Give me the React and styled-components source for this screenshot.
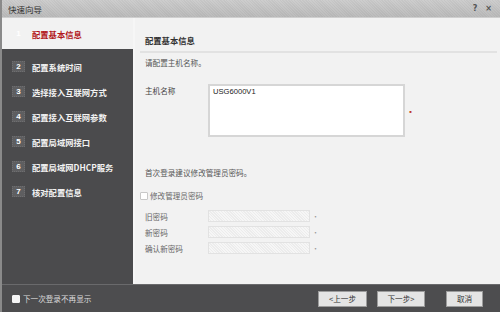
import { createGlobalStyle } from 'styled-components'
import styled from 'styled-components'

const GlobalStyle = createGlobalStyle`
  html, body {
    margin: 0;
    padding: 0;
    width: 500px;
    height: 312px;
    overflow: hidden;
    background: #f2f2f2;
    font-family: "Noto Sans CJK SC", "Liberation Sans", sans-serif;
  }
  * {
    box-sizing: border-box;
  }
`

const Window = styled.div`
  width: 500px;
  height: 312px;
  display: flex;
  flex-direction: column;
  background: #f2f2f2;
  border-left: 2px solid #8a8a8a;
`

const TitleBar = styled.div`
  height: 18px;
  flex: none;
  display: flex;
  align-items: center;
  justify-content: space-between;
  padding: 0 8px 0 6px;
  background: repeating-linear-gradient(45deg, #dcdcdc 0 1px, #e4e4e4 1px 2px),
    linear-gradient(#e6e6e6, #d2d2d2);
  background-blend-mode: multiply;
  border-bottom: 1px solid #cfcfcf;
  font-size: 8.5px;
  color: #333;
`

const TitleTools = styled.div`
  display: flex;
  gap: 8px;
  font-size: 8px;
  font-weight: bold;
  color: #555;
  font-family: "DejaVu Sans", sans-serif;
`

const Body = styled.div`
  flex: 1;
  display: flex;
  min-height: 0;
`

const Sidebar = styled.div`
  width: 131px;
  flex: none;
  display: flex;
  flex-direction: column;
  background: #4b4b4d;
`

const Step = styled.div`
  display: flex;
  align-items: center;
  gap: 7px;
  height: ${p => (p.$active ? '31px' : '25px')};
  padding-left: 10px;
  margin-bottom: ${p => (p.$active ? '5px' : '0')};
  background: ${p => (p.$active ? '#f2f2f2' : 'transparent')};
  color: ${p => (p.$active ? '#b3191c' : '#f2f2f2')};
  font-size: 8.3px;
  font-weight: bold;
`

const Badge = styled.span`
  width: 13px;
  height: 11px;
  display: flex;
  align-items: center;
  justify-content: center;
  font-family: "Liberation Sans", sans-serif;
  font-size: 8px;
  font-weight: bold;
  color: #fff;
  background: ${p => (p.$active ? 'transparent' : '#5e5e60')};
  border: 1px dotted ${p => (p.$active ? 'transparent' : '#6e6e70')};
`

const Content = styled.div`
  flex: 1;
  padding: 16px 3px 0 5px;
  border-left: 2px solid #f6f6f6;
  display: flex;
  flex-direction: column;
`

const Heading = styled.div`
  font-size: 8.3px;
  font-weight: bold;
  color: #333;
  padding: 0 0 5px 5px;
  border-bottom: 2px solid #e2e2e2;
`

const Note = styled.div`
  font-size: 7.6px;
  color: #555;
  padding-left: 5px;
  margin-top: ${p => p.$top || 0}px;
`

const FieldRow = styled.div`
  display: flex;
  align-items: ${p => (p.$tall ? 'flex-start' : 'center')};
  padding-left: 5px;
  margin-top: ${p => p.$top || 0}px;
`

const Label = styled.span`
  width: 63px;
  flex: none;
  font-size: 7.6px;
  color: ${p => (p.$muted ? '#666' : '#444')};
  padding-top: ${p => (p.$tall ? '1px' : 0)};
`

const HostBox = styled.div`
  width: 197px;
  height: 53px;
  background: #fff;
  border: 2px solid #d6d6d6;
  padding: 1px 3px;
  font-family: "Liberation Sans", sans-serif;
  font-size: 7.6px;
  color: #222;
`

const PwdBox = styled.div`
  width: 102px;
  height: 12px;
  border: 1px solid #e2e2e2;
  background: repeating-linear-gradient(45deg, #f6f6f6 0 1px, #ececec 1px 2px);
`

const Star = styled.span`
  font-size: 7px;
  color: ${p => (p.$red ? '#c0392b' : '#999')};
  margin-left: 2px;
  align-self: center;
`

const CheckRow = styled.label`
  display: flex;
  align-items: center;
  gap: 2px;
  margin-top: 12px;
  font-size: 7.6px;
  color: #666;
`

const Box = styled.span`
  width: 8px;
  height: 8px;
  background: ${p => p.$fill || '#fff'};
  border: 1px solid ${p => p.$line || '#c8c8c8'};
  border-radius: 1px;
`

const Footer = styled.div`
  height: 28px;
  flex: none;
  display: flex;
  align-items: center;
  background: #4d4d4f;
  border-top: 1px solid #6a6a6c;
  padding: 0 17px 0 10px;
`

const Remember = styled.label`
  display: flex;
  align-items: center;
  gap: 3px;
  font-size: 7.6px;
  color: #dcdcdc;
  flex: 1;
`

const Button = styled.button`
  width: ${p => p.$w}px;
  height: 16px;
  margin-left: ${p => p.$gap}px;
  background: #e4e4e4;
  border: 1px solid #9c9c9c;
  padding: 0;
  font-family: "Noto Sans CJK SC", "Liberation Sans", sans-serif;
  font-size: 7.6px;
  color: #333;
`

const steps = [
  '配置基本信息',
  '配置系统时间',
  '选择接入互联网方式',
  '配置接入互联网参数',
  '配置局域网接口',
  '配置局域网DHCP服务',
  '核对配置信息',
]

export default function App() {
  return (
    <Window>
      <GlobalStyle />
      <TitleBar>
        <span>快速向导</span>
        <TitleTools>
          <span>?</span>
          <span>×</span>
        </TitleTools>
      </TitleBar>
      <Body>
        <Sidebar>
          {steps.map((s, i) => (
            <Step key={s} $active={i === 0}>
              <Badge $active={i === 0}>{i + 1}</Badge>
              {s}
            </Step>
          ))}
        </Sidebar>
        <Content>
          <Heading>配置基本信息</Heading>
          <Note $top={4}>请配置主机名称。</Note>
          <FieldRow $tall $top={16}>
            <Label $tall>主机名称</Label>
            <HostBox>USG6000V1</HostBox>
            <Star $red>▪</Star>
          </FieldRow>
          <Note $top={30}>首次登录建议修改管理员密码。</Note>
          <CheckRow>
            <Box />
            修改管理员密码
          </CheckRow>
          <FieldRow $top={9}>
            <Label $muted>旧密码</Label>
            <PwdBox />
            <Star>•</Star>
          </FieldRow>
          <FieldRow $top={4}>
            <Label $muted>新密码</Label>
            <PwdBox />
            <Star>•</Star>
          </FieldRow>
          <FieldRow $top={4}>
            <Label $muted>确认新密码</Label>
            <PwdBox />
            <Star>•</Star>
          </FieldRow>
        </Content>
      </Body>
      <Footer>
        <Remember>
          <Box $fill="#f4f4f4" $line="#f4f4f4" />
          下一次登录不再显示
        </Remember>
        <Button $w={49} $gap={0}>&lt;上一步</Button>
        <Button $w={48} $gap={10}>下一步&gt;</Button>
        <Button $w={37} $gap={21}>取消</Button>
      </Footer>
    </Window>
  )
}
